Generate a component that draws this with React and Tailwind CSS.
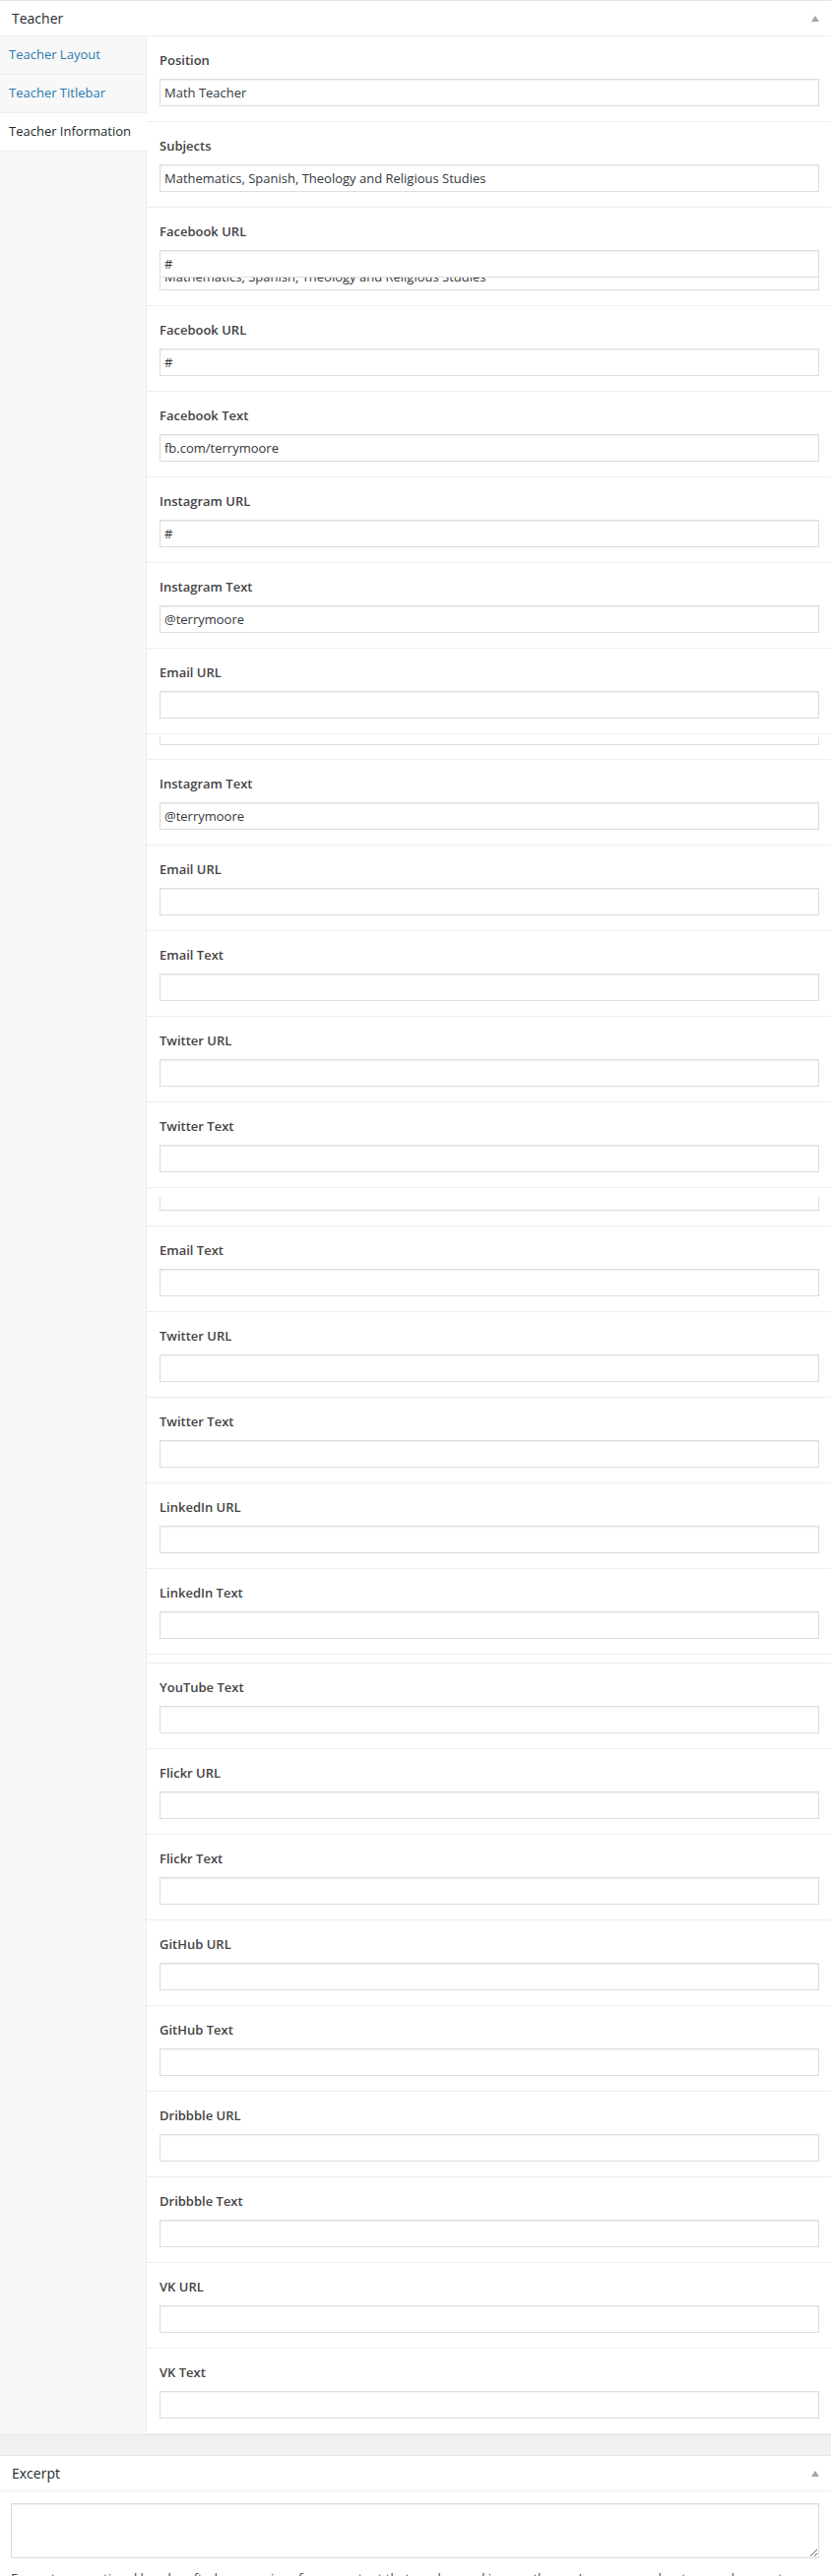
import React from 'react';

const font = { fontFamily: '"Open Sans", "Liberation Sans", sans-serif' };

const rows = [
  { label: 'Position', value: 'Math Teacher' },
  { label: 'Subjects', value: 'Mathematics, Spanish, Theology and Religious Studies' },
  { label: 'Facebook URL', value: '#', ghost: 'Mathematics, Spanish, Theology and Religious Studies' },
  { label: 'Facebook URL', value: '#' },
  { label: 'Facebook Text', value: 'fb.com/terrymoore' },
  { label: 'Instagram URL', value: '#' },
  { label: 'Instagram Text', value: '@terrymoore' },
  { label: 'Email URL', value: '' },
  { strip: 'a' },
  { label: 'Instagram Text', value: '@terrymoore' },
  { label: 'Email URL', value: '' },
  { label: 'Email Text', value: '' },
  { label: 'Twitter URL', value: '' },
  { label: 'Twitter Text', value: '' },
  { strip: 'b' },
  { label: 'Email Text', value: '' },
  { label: 'Twitter URL', value: '' },
  { label: 'Twitter Text', value: '' },
  { label: 'LinkedIn URL', value: '' },
  { label: 'LinkedIn Text', value: '' },
  { strip: 'c' },
  { label: 'YouTube Text', value: '' },
  { label: 'Flickr URL', value: '' },
  { label: 'Flickr Text', value: '' },
  { label: 'GitHub URL', value: '' },
  { label: 'GitHub Text', value: '' },
  { label: 'Dribbble URL', value: '' },
  { label: 'Dribbble Text', value: '' },
  { label: 'VK URL', value: '' },
  { label: 'VK Text', value: '' },
];

const tabs = [
  { name: 'Teacher Layout' },
  { name: 'Teacher Titlebar' },
  { name: 'Teacher Information', active: true },
];

const Toggle = () => (
  <svg width="8" height="6" viewBox="0 0 8 6" className="shrink-0">
    <polygon points="4,0 8,6 0,6" fill="#a0a5aa" />
  </svg>
);

// bottom slice of an input, left over from the page being stitched together
const Ghost = ({ height, text = '' }) => (
  <div
    className="overflow-hidden border-x border-b border-[#ddd] bg-white"
    style={{ height }}
  >
    <div
      className="h-[26px] px-[4px] text-[13px] leading-[26px] text-[#32373c] whitespace-nowrap"
      style={{ marginTop: height - 1 - 26 }}
    >
      {text}
    </div>
  </div>
);

const Field = ({ label, value, ghost }) => (
  <div className="border-b border-[#eee] pt-[14px] pb-[15px] pl-[13px] pr-[12px]">
    <label className="block text-[13px] leading-[20px] font-semibold text-[#444]">{label}</label>
    <input
      type="text"
      readOnly
      value={value}
      className="mt-[9px] block h-[28px] w-full border border-[#ddd] bg-white px-[4px] text-[13px] text-[#32373c] shadow-[inset_0_1px_2px_rgba(0,0,0,0.07)] outline-none"
    />
    {ghost && <Ghost height={13} text={ghost} />}
  </div>
);

const Strip = ({ kind }) => {
  if (kind === 'a') {
    return (
      <div className="border-b border-[#eee] pt-[3px] pb-[14px] pl-[13px] pr-[12px]">
        <Ghost height={8} />
      </div>
    );
  }
  if (kind === 'b') {
    return (
      <div className="border-b border-[#eee] pt-[9px] pb-[15px] pl-[13px] pr-[12px]">
        <Ghost height={14} />
      </div>
    );
  }
  return <div className="h-[9px] border-b border-[#eee]" />;
};

export default function App() {
  return (
    <div className="min-h-screen bg-[#f1f1f1]" style={font}>
      {/* Teacher meta box */}
      <div className="border-t border-b border-[#e5e5e5] bg-white">
        <div className="flex h-[36px] items-center justify-between border-b border-[#eee] px-[12px]">
          <h2 className="text-[14px] leading-[20px] text-[#23282d]">Teacher</h2>
          <Toggle />
        </div>

        <div className="flex">
          <ul className="w-[149px] shrink-0 border-r border-[#eee] bg-[#f8f8f8]">
            {tabs.map((tab) => (
              <li
                key={tab.name}
                className={`flex h-[39px] items-center border-b border-[#eee] pl-[9px] text-[13px] ${
                  tab.active ? '-mr-px bg-white text-[#23282d]' : 'text-[#2a7aaf]'
                }`}
              >
                {tab.name}
              </li>
            ))}
          </ul>

          <div className="min-w-0 flex-1">
            {rows.map((row, i) =>
              row.strip ? (
                <Strip key={i} kind={row.strip} />
              ) : (
                <Field key={i} label={row.label} value={row.value} ghost={row.ghost} />
              )
            )}
          </div>
        </div>
      </div>

      <div className="h-[20px]" />

      {/* Excerpt meta box */}
      <div className="border-t border-[#e5e5e5] bg-white">
        <div className="flex h-[36px] items-center justify-between border-b border-[#eee] px-[12px]">
          <h2 className="text-[14px] leading-[20px] text-[#23282d]">Excerpt</h2>
          <Toggle />
        </div>
        <div className="pt-[12px] pl-[11px] pr-[12px] pb-[12px]">
          <textarea
            readOnly
            className="block h-[56px] w-full border border-[#ddd] bg-white shadow-[inset_0_1px_2px_rgba(0,0,0,0.07)] outline-none"
          />
          <p className="mt-[10px] text-[13px] leading-[20px] text-[#444]">
            Excerpts are optional hand-crafted summaries of your content that can be used in your theme. Learn more about manual excerpts.
          </p>
        </div>
      </div>
    </div>
  );
}
